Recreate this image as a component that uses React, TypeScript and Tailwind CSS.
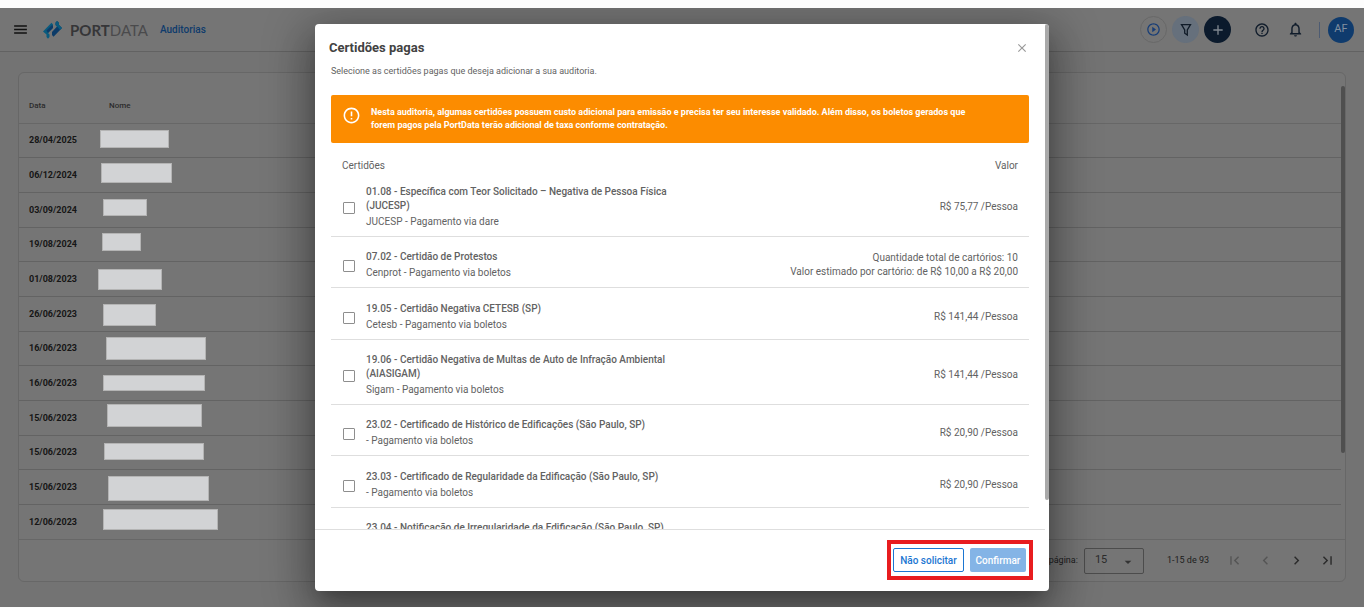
import { useState } from 'react';
import {
  MdAdd,
  MdArrowDropDown,
  MdChevronLeft,
  MdChevronRight,
  MdClose,
  MdErrorOutline,
  MdFirstPage,
  MdHelpOutline,
  MdLastPage,
  MdMenu,
  MdNotificationsNone,
  MdPlayCircleOutline,
} from 'react-icons/md';

const audits = [
  '28/04/2025',
  '06/12/2024',
  '03/09/2024',
  '19/08/2024',
  '01/08/2023',
  '26/06/2023',
  '16/06/2023',
  '16/06/2023',
  '15/06/2023',
  '15/06/2023',
  '15/06/2023',
  '12/06/2023',
];

// Hidden names, placed over the list (relative to the card)
const masks = [
  { left: 81, top: 57, width: 69, height: 18 },
  { left: 82, top: 90, width: 71, height: 20 },
  { left: 84, top: 126, width: 44, height: 17 },
  { left: 83, top: 160, width: 39, height: 18 },
  { left: 79, top: 196, width: 64, height: 21 },
  { left: 84, top: 231, width: 53, height: 22 },
  { left: 87, top: 264, width: 100, height: 23 },
  { left: 84, top: 302, width: 102, height: 16 },
  { left: 88, top: 331, width: 95, height: 23 },
  { left: 85, top: 370, width: 100, height: 17 },
  { left: 89, top: 403, width: 101, height: 25 },
  { left: 84, top: 436, width: 115, height: 21 },
];

const certificates = [
  {
    title: '01.08 - Específica com Teor Solicitado – Negativa de Pessoa Física (JUCESP)',
    source: 'JUCESP - Pagamento via dare',
    price: ['R$ 75,77 /Pessoa'],
  },
  {
    title: '07.02 - Certidão de Protestos',
    source: 'Cenprot - Pagamento via boletos',
    price: [
      'Quantidade total de cartórios: 10',
      'Valor estimado por cartório: de R$ 10,00 a R$ 20,00',
    ],
  },
  {
    title: '19.05 - Certidão Negativa CETESB (SP)',
    source: 'Cetesb - Pagamento via boletos',
    price: ['R$ 141,44 /Pessoa'],
  },
  {
    title: '19.06 - Certidão Negativa de Multas de Auto de Infração Ambiental (AIASIGAM)',
    source: 'Sigam - Pagamento via boletos',
    price: ['R$ 141,44 /Pessoa'],
  },
  {
    title: '23.02 - Certificado de Histórico de Edificações (São Paulo, SP)',
    source: '- Pagamento via boletos',
    price: ['R$ 20,90 /Pessoa'],
  },
  {
    title: '23.03 - Certificado de Regularidade da Edificação (São Paulo, SP)',
    source: '- Pagamento via boletos',
    price: ['R$ 20,90 /Pessoa'],
  },
  {
    title: '23.04 - Notificação de Irregularidade da Edificação (São Paulo, SP)',
    source: '- Pagamento via boletos',
    price: ['R$ 20,90 /Pessoa'],
  },
];

function Logo() {
  return (
    <a href="#" className="flex items-center gap-2" aria-label="PortData">
      <svg width="19" height="18" viewBox="0 0 19 18">
        <path d="M0 10.5 8.500 1.800 10 3.500v3L5 12l1.500 1.500V16L5 17.800 3.500 16v-2.500z" fill="#0a5b7e" />
        <path d="M3.500 9.500 9 4l1 1v2l-5 5z" fill="#0c3b68" />
        <path d="M19 7 10.500 15.700 9 14v-3l5-5.500L12.500 4V1.800L14 0l1.800 1.500v2.300z" fill="#0c3b68" />
        <path d="M12.500 1.800 14 0l1.800 1.500v2.300L19 7l-2 2-3-3.500L12.500 4z" fill="#0a5b7e" />
      </svg>
      <span className="font-[Lato,sans-serif] text-[15px] leading-4 text-[#4a4a4c]">
        <b className="text-[#363638]">PORT</b>DATA
      </span>
    </a>
  );
}

function Header() {
  return (
    <header className="flex h-11 items-center border-b border-[#626262] bg-[#757575] pr-2.5 pl-3">
      <button aria-label="Menu" className="mr-3.5 text-[#111]">
        <MdMenu size={17} />
      </button>
      <Logo />
      <a href="#" className="ml-3 text-[10px] font-medium text-[#0e3b6c]">
        Auditorias
      </a>
      <div className="ml-auto flex items-center gap-[5px]">
        <button
          aria-label="Iniciar"
          className="flex size-[27px] items-center justify-center rounded-full border border-[#686868] text-[#173d77]"
        >
          <MdPlayCircleOutline size={15} />
        </button>
        <button
          aria-label="Filtrar"
          className="flex size-[27px] items-center justify-center rounded-full bg-[#66707c] text-[#101b28]"
        >
          <svg width="12" height="14" viewBox="0 0 12 14" fill="none" stroke="currentColor" strokeWidth="1.300">
            <path d="M1.500 1.700h9L7.300 7v5l-2.600-1.800V7z" />
          </svg>
        </button>
        <button
          aria-label="Adicionar"
          className="flex size-[27px] items-center justify-center rounded-full bg-[#0b1a2c] text-[#808890]"
        >
          <MdAdd size={16} />
        </button>
        <button aria-label="Ajuda" className="ml-[18px] text-[#101c2b]">
          <MdHelpOutline size={16} />
        </button>
        <button aria-label="Notificações" className="ml-3 text-[#101c2b]">
          <MdNotificationsNone size={17} />
        </button>
        <div className="ml-2.5 h-4 w-px bg-[#4d5b72]" />
        <button className="ml-[3px] size-[26px] rounded-full bg-[#0f3b6d] text-[11px] text-[#8290a0]">
          AF
        </button>
      </div>
    </header>
  );
}

function AuditList() {
  return (
    <section className="relative mx-[18px] mt-5 rounded-md border border-[#676767] bg-[#757575]">
      <div className="pr-1">
        <table className="w-full border-collapse text-left">
          <thead>
            <tr className="h-[50px] border-b border-[#676767] text-[8px] text-[#2b2b2b]">
              <th className="w-20 pt-4 pl-2.5 font-medium">Data</th>
              <th className="pt-4 pl-2.5 font-medium">Nome</th>
            </tr>
          </thead>
          <tbody>
            {audits.map((date, i) => (
              <tr
                key={i}
                className="h-[35px] border-b border-[#636363] last:border-b-0 nth-[3n+1]:h-[34px]"
              >
                <td className="pl-2.5 text-[9px] leading-3 font-bold text-[#161616]">{date}</td>
                <td />
              </tr>
            ))}
          </tbody>
        </table>
      </div>
      <footer className="flex h-[42px] items-center justify-end border-t border-[#676767] pr-[9px] text-[9px] text-[#1c1c1c]">
        <label htmlFor="page-size">Linhas por página:</label>
        <div className="relative ml-1.5">
          <select
            id="page-size"
            defaultValue="15"
            className="h-[26px] w-[60px] appearance-none rounded-xs border border-[#4c4c4c] pl-2.5 text-[11px] text-[#2b2b2b]"
          >
            <option>15</option>
            <option>30</option>
          </select>
          <MdArrowDropDown size={16} className="pointer-events-none absolute top-1.5 right-2 text-[#333]" />
        </div>
        <span className="mr-[17px] ml-[23px]">1-15 de 93</span>
        <div className="flex items-center gap-3.5 text-[#2b2b2b]">
          <button disabled aria-label="Primeira página" className="text-[#555]">
            <MdFirstPage size={17} />
          </button>
          <button disabled aria-label="Página anterior" className="text-[#555]">
            <MdChevronLeft size={17} />
          </button>
          <button aria-label="Próxima página">
            <MdChevronRight size={17} />
          </button>
          <button aria-label="Última página">
            <MdLastPage size={17} />
          </button>
        </div>
      </footer>
      {masks.map((mask, i) => (
        <div key={i} className="absolute border border-[#b4b4b4] bg-[#d2d3d5]" style={mask} />
      ))}
      <div className="absolute top-[13px] right-0 h-[367px] w-1 rounded-full bg-[#4f4f4f]" />
    </section>
  );
}

function PaidCertificatesDialog() {
  const [selected, setSelected] = useState<number[]>([]);

  const toggle = (index: number) => {
    setSelected((prev) =>
      prev.includes(index) ? prev.filter((i) => i !== index) : [...prev, index]
    );
  };

  return (
    <div
      role="dialog"
      aria-labelledby="dialog-title"
      className="flex h-full w-full max-w-[734px] overflow-hidden rounded-sm bg-white text-[#626262] shadow-[0_11px_15px_-7px_rgba(0,0,0,0.2),0_24px_38px_3px_rgba(0,0,0,0.14),0_9px_46px_8px_rgba(0,0,0,0.3)]"
    >
      <div className="flex min-w-0 flex-1 flex-col">
        <div className="min-h-0 flex-1 overflow-hidden px-4 pt-4">
          <div className="flex h-4 items-center justify-between">
            <h2 id="dialog-title" className="-ml-0.5 text-[13px] leading-4 font-bold text-[#424242]">
              Certidões pagas
            </h2>
            <button aria-label="Fechar" className="text-[#999]">
              <MdClose size={14} />
            </button>
          </div>
          <p className="mt-2 text-[9px] leading-[14px]">
            Selecione as certidões pagas que deseja adicionar a sua auditoria.
          </p>
          <div className="mt-[17px] flex h-12 items-start gap-2.5 rounded-xs bg-[#fc8c00] pt-[11px] pr-8 pl-[11px] text-white">
            <MdErrorOutline size={19} className="shrink-0" />
            <p className="max-w-[615px] text-[9px] leading-[13px] font-bold">
              Nesta auditoria, algumas certidões possuem custo adicional para emissão e precisa ter seu
              interesse validado. Além disso, os boletos gerados que forem pagos pela PortData terão
              adicional de taxa conforme contratação.
            </p>
          </div>
          <table className="w-full border-collapse text-[10px] leading-[14px]">
            <thead className="leading-[13px]">
              <tr>
                <th colSpan={2} className="pt-4 pl-[11px] text-left font-normal">
                  Certidões
                </th>
                <th className="pt-4 pr-[11px] text-right font-normal">Valor</th>
              </tr>
            </thead>
            <tbody>
              {certificates.map((item, i) => (
                <tr key={item.title} className="border-b border-[#dedede] nth-[3n]:h-13">
                  <td className="w-[35px] pt-[15px] pb-[7px] pl-3">
                    <input
                      id={`cert-${i}`}
                      type="checkbox"
                      checked={selected.includes(i)}
                      onChange={() => toggle(i)}
                      className="block size-3 appearance-none rounded-[1px] border border-[#8e8e8e] checked:bg-[#1976d2]"
                    />
                  </td>
                  <td className="pt-[13px] pb-[7px]">
                    <label htmlFor={`cert-${i}`} className="block max-w-[310px] font-medium">
                      {item.title}
                    </label>
                    <p className="mt-0.5">{item.source}</p>
                  </td>
                  <td className="pt-[13px] pr-[11px] pb-[7px] text-right">
                    {item.price.map((line) => (
                      <p key={line}>{line}</p>
                    ))}
                  </td>
                </tr>
              ))}
            </tbody>
          </table>
        </div>
        <div className="flex h-[62px] items-start justify-end border-t border-[#dedede] pt-2.5 pr-3">
          <div className="flex gap-1.5 border-4 border-[#e81c1f] py-1 pr-[3px] pl-0.5">
            <button className="h-6 w-[71px] rounded-xs border border-[#1b76d2] text-[10px] font-medium text-[#1b76d2]">
              Não solicitar
            </button>
            <button className="h-6 w-14 rounded-xs bg-[#84b4e6] text-[10px] font-medium text-white">
              Confirmar
            </button>
          </div>
        </div>
      </div>
      <div className="w-1">
        <div className="h-[84%] rounded-full bg-[#a9a9a9]" />
      </div>
    </div>
  );
}

export default function App() {
  return (
    <div className="flex min-h-screen flex-col bg-[#fdfdfd] pt-2 pb-px font-[Roboto,sans-serif]">
      <div className="relative flex-1 overflow-hidden bg-[#737373]">
        <Header />
        <AuditList />
        <div className="absolute inset-0 flex items-center justify-center p-4">
          <PaidCertificatesDialog />
        </div>
      </div>
    </div>
  );
}
